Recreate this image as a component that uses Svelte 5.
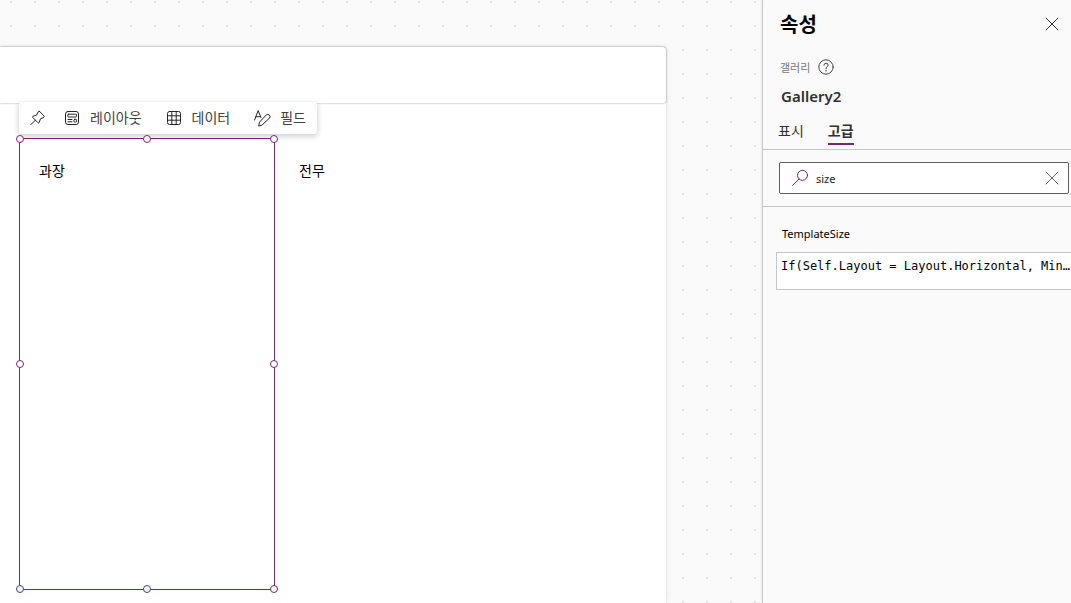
<script lang="ts">
  /** Studio editor: design canvas with a selected gallery, and its property pane. */
  type ToolIcon = "layout" | "data" | "fields";

  const tools: { icon: ToolIcon; label: string }[] = [
    { icon: "layout", label: "레이아웃" },
    { icon: "data", label: "데이터" },
    { icon: "fields", label: "필드" },
  ];
  const tabs = ["표시", "고급"];
  const handles = ["nw", "n", "ne", "w", "e", "sw", "s", "se"];

  let activeTab = $state("고급");
  let query = $state("size");
  let formula = $state("If(Self.Layout = Layout.Horizontal, Min…");
</script>

<div class="studio">
  <main class="workspace">
    <div class="screen">
      <div class="screen-header"></div>
      <div class="gallery">
        <section class="item selected">
          <span>과장</span>
          <div class="toolbar" role="toolbar" aria-label="갤러리">
            <button type="button" class="tool pin" aria-label="고정">
              <svg width="16" height="16" viewBox="0 0 16 16"><path d="M9.6 1.5 14 5.9Q14.7 6.7 13.8 7.3L10.4 9 9.2 12.6Q8.8 13.4 8.1 12.8L2.7 7.4Q2.1 6.7 2.9 6.3L6.5 5.1 8.2 1.8Q8.8.8 9.6 1.5ZM5.4 10.1 .9 14.6" /></svg>
            </button>
            {#each tools as tool (tool.icon)}
              <button type="button" class="tool {tool.icon}">
                {#if tool.icon === "layout"}
                  <svg width="16" height="16" viewBox="0 0 16 16"><rect x="1.5" y="1.5" width="13" height="13" rx="2.5" /><rect x="3.8" y="4.2" width="8.8" height="2.8" rx="0.8" /><path d="M4 9.5H8M4 11.8H8" /><rect x="9.9" y="9.3" width="2.7" height="2.7" rx="0.8" /></svg>
                {:else if tool.icon === "data"}
                  <svg width="16" height="16" viewBox="0 0 16 16"><rect x="1.5" y="1.5" width="13" height="13" rx="2" /><path d="M5.8 1.5V14.5M10.2 1.5V14.5M1.5 5.8H14.5M1.5 10.2H14.5" /></svg>
                {:else}
                  <svg width="18" height="18" viewBox="0 0 18 18"><path d="M.6 11 4.1 1.6 6.9 8.3M1.9 7.7H6.5M4.7 16.7 5.5 13.2 12.2 6Q13.6 4.6 15.3 6 16.9 7.7 15.5 9.1L8.3 15.8Z" /></svg>
                {/if}
                <span>{tool.label}</span>
              </button>
            {/each}
          </div>
          {#each handles as handle}
            <i class="handle {handle}"></i>
          {/each}
        </section>
        <section class="item"><span>전무</span></section>
      </div>
    </div>
  </main>

  <aside class="pane">
    <header class="pane-head">
      <h2>속성</h2>
      <button type="button" class="icon-btn" aria-label="닫기">
        <svg width="14" height="14" viewBox="0 0 14 14"><path d="M1 1 13 13M13 1 1 13" /></svg>
      </button>
    </header>
    <div class="kind">
      <span>갤러리</span>
      <button type="button" class="icon-btn" aria-label="도움말">
        <svg width="16" height="16" viewBox="0 0 16 16"><circle cx="8" cy="8" r="7.2" /><path d="M5.9 6.2Q6 4.2 8 4.2 10.1 4.2 10.1 6 10.1 7 9.1 7.8 8 8.6 8 9.8M8 11.3V12.1" /></svg>
      </button>
    </div>
    <div class="name">Gallery2</div>
    <div class="tabs" role="tablist">
      {#each tabs as tab}
        <button type="button" role="tab" aria-selected={activeTab === tab} class:active={activeTab === tab} onclick={() => (activeTab = tab)}>{tab}</button>
      {/each}
    </div>
    <div class="search-row">
      <div class="search">
        <svg width="16" height="18" viewBox="0 0 16 18"><circle cx="10.5" cy="6.3" r="5" /><path d="M7 10 .7 16.4" /></svg>
        <input type="text" aria-label="속성 검색" bind:value={query} />
        <button type="button" class="icon-btn" aria-label="지우기" onclick={() => (query = "")}>
          <svg width="14" height="14" viewBox="0 0 14 14"><path d="M1 1 13 13M13 1 1 13" /></svg>
        </button>
      </div>
    </div>
    <div class="property">
      <label for="template-size">TemplateSize</label>
      <textarea id="template-size" rows="1" spellcheck="false" bind:value={formula}></textarea>
    </div>
  </aside>
</div>

<style>
  :global(body) { background: #fafafa; }
  .studio { display: flex; min-height: 100vh; overflow: hidden; font-family: "Noto Sans", "Noto Sans CJK KR", sans-serif; font-size: 14px; color: #323130; }
  .studio * { box-sizing: border-box; }
  button { padding: 0; border: 0; background: transparent; font: inherit; color: inherit; cursor: pointer; }
  svg { display: block; flex: none; fill: none; stroke: currentColor; stroke-linecap: round; stroke-linejoin: round; }

  .workspace { flex: 1; min-width: 0; display: flex; padding: 47px 96px 0 0; background: conic-gradient(from 270deg at 2px 2px, #e1dfdd 90deg, transparent 0) 10px 1px / 24px 24px #fafafa; }
  .screen { flex: 1; min-width: 0; background: #fff; border-top-right-radius: 3px; box-shadow: 0 0 2px rgba(0, 0, 0, .16), 0 0 8px rgba(0, 0, 0, .06); }
  .screen-header { height: 56px; border-radius: 0 3px 3px 0; box-shadow: 0 0 2px rgba(0, 0, 0, .45); }
  .gallery { display: flex; gap: 4px; margin: 35px 0 0 19px; font-family: "Noto Sans CJK KR", sans-serif; color: #000; }
  .item { position: relative; width: 256px; min-height: 452px; padding: 22px 20px; line-height: 20px; }
  .item.selected { padding: 21px 19px; border: 1px solid #742774; }

  .handle { position: absolute; width: 8px; height: 8px; border: 1px solid #742774; border-radius: 50%; background: #fff; }
  .nw, .n, .ne { top: -4px; }
  .w, .e { top: calc(50% - 4px); }
  .sw, .s, .se { bottom: -4px; }
  .nw, .w, .sw { left: -4px; }
  .n, .s { left: calc(50% - 4px); }
  .ne, .e, .se { right: -4px; }

  .toolbar { position: absolute; left: -1px; bottom: calc(100% + 5px); display: flex; align-items: center; gap: 24px; height: 32px; padding: 0 11px; background: #fff; border-radius: 3px; box-shadow: 0 2px 6px rgba(0, 0, 0, .22); color: #424242; white-space: nowrap; }
  .tool { display: flex; align-items: center; gap: 10px; }
  .tool svg { color: #242424; }
  .tool span { height: 22px; line-height: 20px; }
  .tool.pin { margin-right: -6px; }
  .tool.fields { gap: 8px; }

  .pane { width: 309px; flex: none; background: #fafafa; border-left: 1px solid #c8c6c4; box-shadow: 0 0 3px rgba(0, 0, 0, .12); }
  .pane-head { display: flex; align-items: center; justify-content: space-between; height: 48px; padding: 0 12px 0 17px; }
  .pane-head h2 { margin: 0; font-family: "Noto Sans CJK KR", sans-serif; font-size: 20px; line-height: 28px; font-weight: 700; color: #000; }
  .kind { display: flex; align-items: center; gap: 8px; height: 37px; padding-left: 17px; font-size: 11px; color: #797775; }
  .kind svg { color: #484644; }
  .name { padding-left: 18px; font-size: 15px; line-height: 22px; font-weight: 600; }
  .tabs { display: flex; gap: 24px; height: 43px; padding: 12px 15px 5px; border-bottom: 1px solid #c8c6c4; }
  .tabs button { height: 26px; padding-bottom: 2px; border-bottom: 2px solid transparent; font-family: "Noto Sans CJK KR", sans-serif; line-height: 20px; }
  .tabs .active { font-weight: 700; border-color: #742774; }
  .search-row { padding: 12px 2px 12px 16px; border-bottom: 1px solid #c8c6c4; }
  .search { display: flex; align-items: center; gap: 8px; height: 32px; padding: 0 9px 0 12px; background: #fff; border: 1px solid #605e5c; border-radius: 2px; color: #742774; }
  .search input { flex: 1; min-width: 0; padding: 0; border: 0; outline: 0; background: transparent; font: inherit; font-size: 11px; color: #201f1e; }
  .search .icon-btn { color: #605e7c; }
  .property { padding: 18px 0 0 13px; }
  .property label { display: block; padding: 0 6px 9px; font-size: 11px; line-height: 18px; color: #000; }
  .property textarea { display: block; width: 100%; height: 38px; padding: 5px 0 0 4px; border: 1px solid #c8c6c4; border-right: 0; resize: none; overflow: hidden; background: #fff; outline: 0; white-space: pre; font-family: "DejaVu Sans Mono", monospace; font-size: 12px; line-height: 16px; color: #000; }
</style>
